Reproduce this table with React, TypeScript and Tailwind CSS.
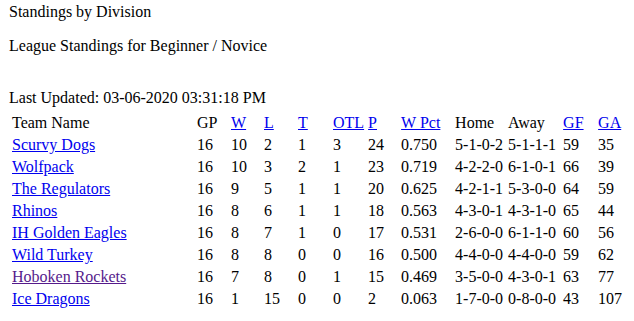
const rows = [
  ['Scurvy Dogs', '16', '10', '2', '1', '3', '24', '0.750', '5-1-0-2', '5-1-1-1', '59', '35'],
  ['Wolfpack', '16', '10', '3', '2', '1', '23', '0.719', '4-2-2-0', '6-1-0-1', '66', '39'],
  ['The Regulators', '16', '9', '5', '1', '1', '20', '0.625', '4-2-1-1', '5-3-0-0', '64', '59'],
  ['Rhinos', '16', '8', '6', '1', '1', '18', '0.563', '4-3-0-1', '4-3-1-0', '65', '44'],
  ['IH Golden Eagles', '16', '8', '7', '1', '0', '17', '0.531', '2-6-0-0', '6-1-1-0', '60', '56'],
  ['Wild Turkey', '16', '8', '8', '0', '0', '16', '0.500', '4-4-0-0', '4-4-0-0', '59', '62'],
  ['Hoboken Rockets', '16', '7', '8', '0', '1', '15', '0.469', '3-5-0-0', '4-3-0-1', '63', '77'],
  ['Ice Dragons', '16', '1', '15', '0', '0', '2', '0.063', '1-7-0-0', '0-8-0-0', '43', '107'],
]

// header: [label, sortable link, width]
const headers: [string, boolean, string][] = [
  ['Team Name', false, 'w-[183px]'],
  ['GP', false, 'w-[32px]'],
  ['W', true, 'w-[31px]'],
  ['L', true, 'w-[32px]'],
  ['T', true, 'w-[33px]'],
  ['OTL', true, 'w-[33px]'],
  ['P', true, 'w-[31px]'],
  ['W Pct', true, 'w-[52px]'],
  ['Home', false, 'w-[51px]'],
  ['Away', false, 'w-[53px]'],
  ['GF', true, 'w-[33px]'],
  ['GA', true, ''],
]

export default function App() {
  return (
    <div className="bg-white text-black font-['Liberation_Serif',serif] text-[16px] leading-[normal] pl-[9px] pt-[3px] h-[321px] w-[634px] overflow-hidden">
      <div>Standings by Division</div>
      <p className="my-4">League Standings for Beginner / Novice</p>
      <p className="mt-[34px]">Last Updated: 03-06-2020 03:31:18 PM</p>

      <table className="border-separate border-spacing-[2px] mt-[4px]">
        <tbody>
          <tr>
            {headers.map(([label, link, w]) => (
              <td key={label} className={`p-px text-left align-middle whitespace-nowrap ${w}`}>
                {link ? <a href="#" className="text-[#0000ee] underline">{label}</a> : label}
              </td>
            ))}
          </tr>
          {rows.map(r => (
            <tr key={r[0]}>
              {r.map((cell, i) => (
                <td key={i} className="p-px text-left align-middle whitespace-nowrap">
                  {i === 0 ? (
                    <a
                      href="#"
                      className={`underline ${r[0] === 'Hoboken Rockets' ? 'text-[#551a8b]' : 'text-[#0000ee]'}`}
                    >
                      {cell}
                    </a>
                  ) : cell}
                </td>
              ))}
            </tr>
          ))}
        </tbody>
      </table>
    </div>
  )
}
